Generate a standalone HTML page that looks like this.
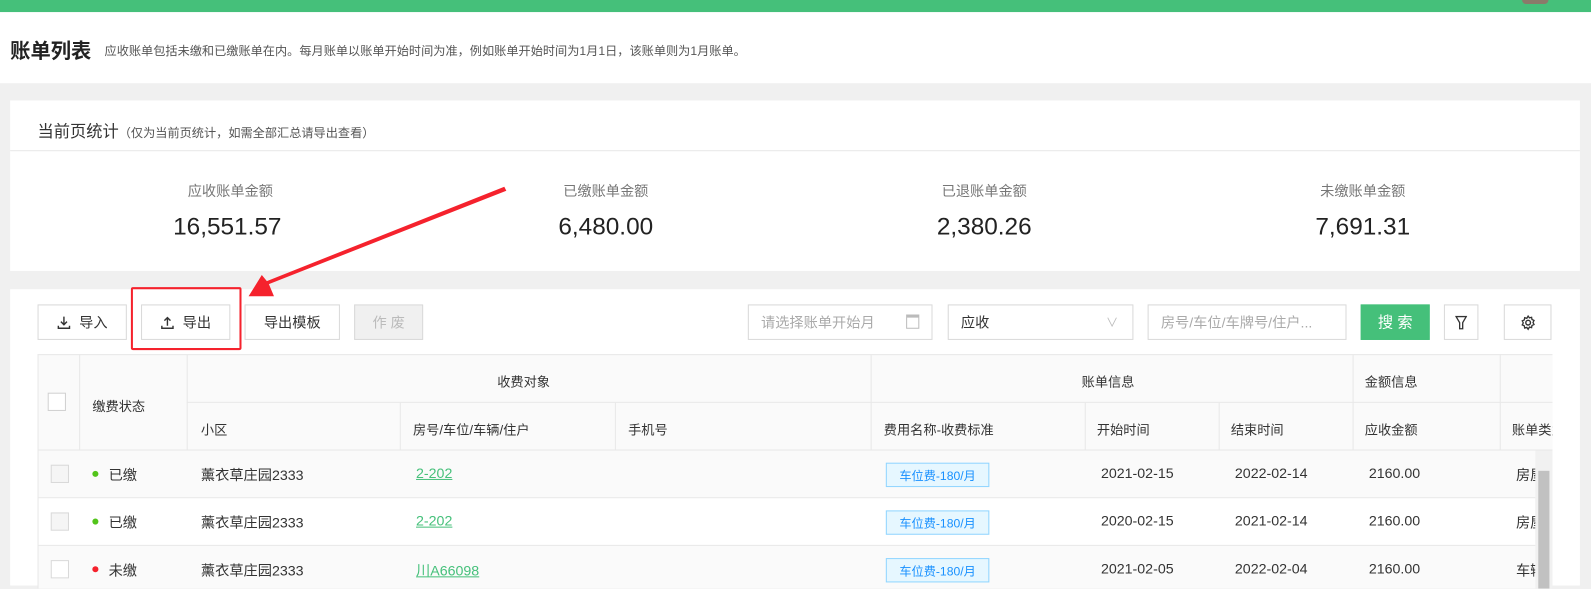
<!DOCTYPE html>
<html><head><meta charset="utf-8"><style>
*{margin:0;padding:0;box-sizing:border-box}
body{width:1591px;height:580px;overflow:hidden;background:#f0f0f0;font-family:"Liberation Sans","Noto Sans CJK SC",sans-serif;color:#333;position:relative}
#w{position:absolute;left:0;top:0;width:1568px;height:572px;transform:scale(1.0147);transform-origin:0 0}
.abs{position:absolute}
.top{left:0;top:0;width:1568px;height:12px;background:#45c07a}
.hdr{left:0;top:12px;width:1568px;height:70px;background:#fff}
.card{background:#fff}
.btn{position:absolute;top:300px;height:35px;border:1px solid #d9d9d9;background:#fff;font-size:14px;display:flex;align-items:center;justify-content:center;color:#333}
.inp{position:absolute;top:300px;height:35px;border:1px solid #d9d9d9;background:#fff;font-size:14px;color:#aaa;padding-left:12px;display:flex;align-items:center}
.th{position:absolute;font-size:13px;color:#333;display:flex;align-items:center}
.vl{position:absolute;width:1px;background:#e8e8e8}
.hl{position:absolute;height:1px;background:#e8e8e8}
.cell{position:absolute;font-size:14px;color:#333}
.tag{position:absolute;left:873px;width:102px;height:24px;border:1px solid #91d5ff;background:#e6f7ff;color:#1890ff;font-size:12px;display:flex;align-items:center;justify-content:center}
.cb{position:absolute;left:50px;width:18px;height:18px;border:1px solid #d9d9d9;background:#f5f5f5}
.dot{position:absolute;left:91px;width:6px;height:6px;border-radius:50%}
.lk{position:absolute;left:410px;font-size:14px;color:#45c07a;text-decoration:underline}
</style></head><body><div id="w">
<div class="abs top"></div>
<div class="abs" style="left:1500px;top:0;width:26px;height:4px;background:#8a7a6a;border-radius:0 0 13px 13px"></div>
<div class="abs hdr"></div>
<div class="abs" style="left:10px;top:34px;font-size:20px;font-weight:bold;color:#222">账单列表</div>
<div class="abs" style="left:103px;top:41px;font-size:12px;color:#555">应收账单包括未缴和已缴账单在内。每月账单以账单开始时间为准，例如账单开始时间为1月1日，该账单则为1月账单。</div>

<div class="abs card" style="left:10px;top:99px;width:1547px;height:168px"></div>
<div class="abs" style="left:37px;top:116px;font-size:16px;color:#333">当前页统计<span style="font-size:12px;color:#555">（仅为当前页统计，如需全部汇总请导出查看）</span></div>
<div class="hl" style="left:10px;top:148px;width:1547px"></div>
<div class="abs" style="left:127px;top:178px;width:200px;text-align:center;font-size:14px;color:#777">应收账单金额</div>
<div class="abs" style="left:124px;top:210px;width:200px;text-align:center;font-size:24px;color:#222">16,551.57</div>
<div class="abs" style="left:497px;top:178px;width:200px;text-align:center;font-size:14px;color:#777">已缴账单金额</div>
<div class="abs" style="left:497px;top:210px;width:200px;text-align:center;font-size:24px;color:#222">6,480.00</div>
<div class="abs" style="left:870px;top:178px;width:200px;text-align:center;font-size:14px;color:#777">已退账单金额</div>
<div class="abs" style="left:870px;top:210px;width:200px;text-align:center;font-size:24px;color:#222">2,380.26</div>
<div class="abs" style="left:1243px;top:178px;width:200px;text-align:center;font-size:14px;color:#777">未缴账单金额</div>
<div class="abs" style="left:1243px;top:210px;width:200px;text-align:center;font-size:24px;color:#222">7,691.31</div>

<div class="abs card" style="left:10px;top:285px;width:1547px;height:292px"></div>
<div class="btn" style="left:37px;width:88px"><svg width="14" height="14" viewBox="0 0 14 14" style="margin-right:8px"><path d="M7 1v8M4 6l3 3 3-3M1.5 10v2.5h11V10" fill="none" stroke="#333" stroke-width="1.4"/></svg>导入</div>
<div class="btn" style="left:139px;width:88px"><svg width="14" height="14" viewBox="0 0 14 14" style="margin-right:8px"><path d="M7 10V2M4 5l3-3 3 3M1.5 10v2.5h11V10" fill="none" stroke="#333" stroke-width="1.4"/></svg>导出</div>
<div class="btn" style="left:241px;width:94px">导出模板</div>
<div class="btn" style="left:349px;width:68px;background:#f0f0f0;color:#bbb">作 废</div>
<div class="abs" style="left:129px;top:283px;width:109px;height:62px;border:2px solid #f5222d;border-radius:2px"></div>
<div class="inp" style="left:737px;width:182px">请选择账单开始月<span style="position:absolute;right:12px;top:9px;width:13px;height:14px;border:1px solid #bbb;border-top-width:3px"></span></div>
<div class="inp" style="left:934px;width:183px;color:#333">应收<span style="position:absolute;right:14px;color:#bbb;font-size:12px">∨</span></div>
<div class="inp" style="left:1131px;width:196px">房号/车位/车牌号/住户...</div>
<div class="btn" style="left:1341px;width:68px;background:#45c07a;border-color:#45c07a;color:#fff;font-size:15px">搜 索</div>
<div class="btn" style="left:1423px;width:34px"><svg width="12" height="14" viewBox="0 0 12 14"><path d="M1 1h10L7.5 7v6h-3V7z" fill="none" stroke="#333" stroke-width="1.3"/></svg></div>
<div class="btn" style="left:1482px;width:47px"><svg width="16" height="16" viewBox="0 0 16 16"><circle cx="8" cy="8" r="2.3" fill="none" stroke="#333" stroke-width="1.4"/><path d="M8 1.5l1.3 1.8 2.1-.6.4 2.2 2 .9-1 2 1 2-2 .9-.4 2.2-2.1-.6L8 14.5l-1.3-1.8-2.1.6-.4-2.2-2-.9 1-2-1-2 2-.9.4-2.2 2.1.6z" fill="none" stroke="#333" stroke-width="1.3"/></svg></div>

<div class="abs" style="left:37px;top:349px;width:1493px;height:94px;background:#fafafa;border-top:1px solid #e8e8e8"></div>
<div class="abs" style="left:37px;top:443px;width:1493px;height:47px;background:#fafafa"></div>
<div class="abs" style="left:37px;top:490px;width:1493px;height:47px;background:#fff"></div>
<div class="abs" style="left:37px;top:537px;width:1493px;height:43px;background:#fafafa"></div>
<div class="hl" style="left:184px;top:396px;width:1346px"></div>
<div class="hl" style="left:37px;top:443px;width:1493px"></div>
<div class="hl" style="left:37px;top:490px;width:1493px"></div>
<div class="hl" style="left:37px;top:537px;width:1493px"></div>
<div class="vl" style="left:37px;top:349px;height:231px"></div>
<div class="vl" style="left:78px;top:349px;height:94px"></div>
<div class="vl" style="left:184px;top:349px;height:94px"></div>
<div class="vl" style="left:394px;top:397px;height:46px"></div>
<div class="vl" style="left:606px;top:397px;height:46px"></div>
<div class="vl" style="left:858px;top:349px;height:94px"></div>
<div class="vl" style="left:1069px;top:397px;height:46px"></div>
<div class="vl" style="left:1201px;top:397px;height:46px"></div>
<div class="vl" style="left:1333px;top:349px;height:94px"></div>
<div class="vl" style="left:1478px;top:349px;height:94px"></div>
<div class="abs" style="left:47px;top:387px;width:18px;height:18px;border:1px solid #d0d0d0;background:#fff"></div>
<div class="th" style="left:91px;top:390px">缴费状态</div>
<div class="th" style="left:490px;top:366px">收费对象</div>
<div class="th" style="left:1066px;top:366px">账单信息</div>
<div class="th" style="left:1345px;top:366px">金额信息</div>
<div class="th" style="left:198px;top:413px">小区</div>
<div class="th" style="left:407px;top:413px">房号/车位/车辆/住户</div>
<div class="th" style="left:619px;top:413px">手机号</div>
<div class="th" style="left:871px;top:413px">费用名称-收费标准</div>
<div class="th" style="left:1081px;top:413px">开始时间</div>
<div class="th" style="left:1213px;top:413px">结束时间</div>
<div class="th" style="left:1345px;top:413px">应收金额</div>
<div class="th" style="left:1490px;top:413px;width:40px;overflow:hidden;white-space:nowrap">账单类型</div>

<div class="cb" style="top:458px"></div><div class="dot" style="top:464px;background:#52c41a"></div>
<div class="cell" style="left:107px;top:458px">已缴</div><div class="cell" style="left:198px;top:458px">薰衣草庄园2333</div>
<div class="lk" style="top:458px">2-202</div><div class="tag" style="top:456px">车位费-180/月</div>
<div class="cell" style="left:1085px;top:458px">2021-02-15</div><div class="cell" style="left:1217px;top:458px">2022-02-14</div><div class="cell" style="left:1349px;top:458px">2160.00</div><div class="cell" style="left:1494px;top:458px">房屋</div>

<div class="cb" style="top:505px"></div><div class="dot" style="top:511px;background:#52c41a"></div>
<div class="cell" style="left:107px;top:505px">已缴</div><div class="cell" style="left:198px;top:505px">薰衣草庄园2333</div>
<div class="lk" style="top:505px">2-202</div><div class="tag" style="top:503px">车位费-180/月</div>
<div class="cell" style="left:1085px;top:505px">2020-02-15</div><div class="cell" style="left:1217px;top:505px">2021-02-14</div><div class="cell" style="left:1349px;top:505px">2160.00</div><div class="cell" style="left:1494px;top:505px">房屋</div>

<div class="cb" style="top:552px;background:#fff"></div><div class="dot" style="top:558px;background:#f5222d"></div>
<div class="cell" style="left:107px;top:552px">未缴</div><div class="cell" style="left:198px;top:552px">薰衣草庄园2333</div>
<div class="lk" style="top:552px">川A66098</div><div class="tag" style="top:550px">车位费-180/月</div>
<div class="cell" style="left:1085px;top:552px">2021-02-05</div><div class="cell" style="left:1217px;top:552px">2022-02-04</div><div class="cell" style="left:1349px;top:552px">2160.00</div><div class="cell" style="left:1494px;top:552px">车辆</div>

<div class="abs" style="left:1513px;top:444px;width:17px;height:136px;background:#f1f1f1"></div>
<div class="abs" style="left:1516px;top:464px;width:11px;height:116px;background:#c1c1c1"></div>

<svg class="abs" style="left:0;top:0" width="1568" height="572"><polygon points="497,184 499,188 265,280 270,292 245,292 258,271 263,277" fill="#f5222d"/></svg>
</div></body></html>
